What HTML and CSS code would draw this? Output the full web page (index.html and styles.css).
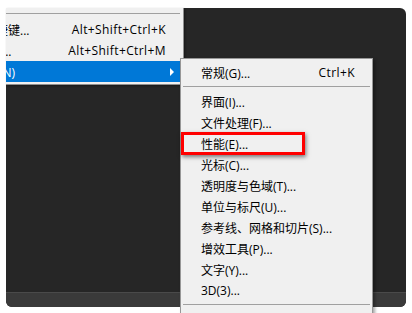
FILE: index.html
```html
<!DOCTYPE html>
<html lang="zh-CN">
<head>
    <meta charset="UTF-8">
    <title>首选项</title>
    <link rel="stylesheet" href="styles.css">
</head>
<body>
    <div class="window">
        <div class="workspace"></div>
        <div class="status-bar"></div>

        <div class="menu edit-menu">
            <div class="separator"></div>
            <div class="item">
                <span class="label cut-keys">键盘快捷键...</span>
                <span class="shortcut">Alt+Shift+Ctrl+K</span>
            </div>
            <div class="item">
                <span class="label cut-menus">菜单...</span>
                <span class="shortcut">Alt+Shift+Ctrl+M</span>
            </div>
            <div class="item active">
                <span class="label cut-prefs">首选项(N)</span>
                <span class="arrow"></span>
            </div>
        </div>

        <div class="menu prefs-menu">
            <div class="item">
                <span class="label">常规(G)...</span>
                <span class="shortcut">Ctrl+K</span>
            </div>
            <div class="separator"></div>
            <div class="item"><span class="label">界面(I)...</span></div>
            <div class="item"><span class="label">文件处理(F)...</span></div>
            <div class="item"><span class="label">性能(E)...</span></div>
            <div class="item"><span class="label">光标(C)...</span></div>
            <div class="item"><span class="label">透明度与色域(T)...</span></div>
            <div class="item"><span class="label">单位与标尺(U)...</span></div>
            <div class="item"><span class="label">参考线、网格和切片(S)...</span></div>
            <div class="item"><span class="label">增效工具(P)...</span></div>
            <div class="item"><span class="label">文字(Y)...</span></div>
            <div class="item"><span class="label">3D(3)...</span></div>
            <div class="separator"></div>
        </div>

        <div class="highlight-box"></div>
    </div>
</body>
</html>
```

FILE: styles.css
```css
* {
    margin: 0;
    padding: 0;
    box-sizing: border-box;
}

body {
    background: #fff;
    padding: 8px 6px 6px 6px;
    font-family: "Open Sans", "Noto Sans CJK SC", sans-serif;
    font-size: 12px;
    color: #000;
    overflow: hidden;
}

.window {
    position: relative;
    width: 400px;
    height: 299px;
    background: #262626;
    border-radius: 0 6px 6px 6px;
    display: flex;
    flex-direction: column;
}

.workspace {
    flex: 1;
}

.status-bar {
    height: 15px;
    background: #3a3a3a;
    border-top: 1px solid #4a4a4a;
    border-radius: 0 0 6px 6px;
}

.menu {
    position: absolute;
    background: #f0f0f0;
}

.menu .item {
    height: 21px;
    display: flex;
    align-items: center;
    white-space: nowrap;
}

.menu .shortcut {
    letter-spacing: 0.4px;
}

.menu .separator {
    height: 1px;
    background: #a0a0a0;
    margin: 3px 3px;
}

/* left menu is cut by the screenshot edge */
.edit-menu {
    left: 0;
    top: 0;
    width: 178px;
    height: 77px;
    padding-top: 5px;
    overflow: hidden;
    border-right: 1px solid #8f8f8f;
    border-bottom: 1px solid #8f8f8f;
    box-shadow: 1px 1px 2px rgba(0, 0, 0, 0.4);
}

.edit-menu .separator {
    margin: 0 3px 5px 0;
}

.edit-menu .shortcut {
    margin-left: auto;
    margin-right: 17px;
}

.edit-menu .item.active {
    background: #0078d7;
    color: #fff;
}

.cut-keys {
    margin-left: -46px;
}

.cut-menus {
    margin-left: -28px;
}

.cut-prefs {
    margin-left: -43px;
}

.arrow {
    margin-left: auto;
    margin-right: 9px;
    width: 0;
    height: 0;
    border-top: 4px solid transparent;
    border-bottom: 4px solid transparent;
    border-left: 4px solid #fff;
}

.prefs-menu {
    left: 174px;
    top: 50px;
    width: 193px;
    height: 270px;
    padding-top: 3px;
    border: 1px solid #979797;
    box-shadow: 2px 2px 3px rgba(0, 0, 0, 0.35);
}

.prefs-menu .label {
    margin-left: 20px;
}

.prefs-menu .shortcut {
    margin-left: auto;
    margin-right: 17px;
}

.prefs-menu .separator {
    margin: 3px 2px 4px 2px;
}

.highlight-box {
    position: absolute;
    left: 175px;
    top: 124px;
    width: 124px;
    height: 23px;
    border: 3px solid #ff0000;
    box-shadow: 1px 2px 4px rgba(0, 0, 0, 0.5);
}
```
